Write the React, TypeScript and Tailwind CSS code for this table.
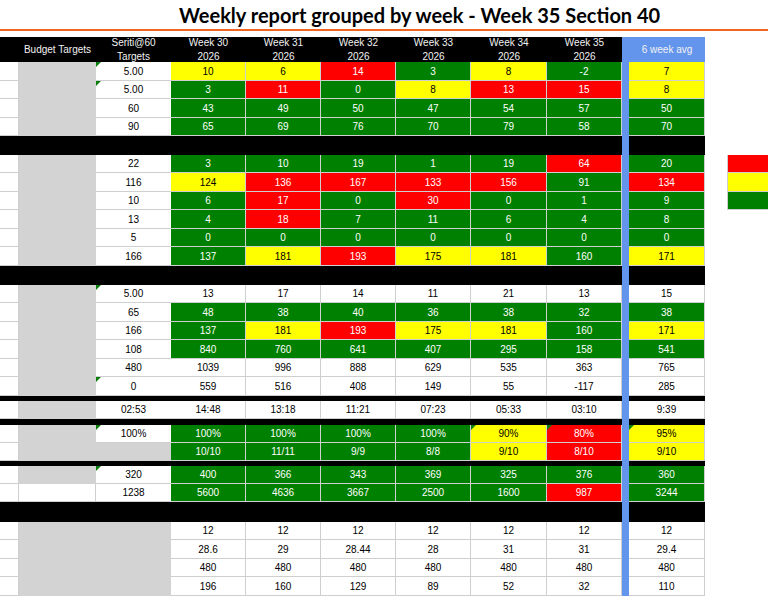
import React from "react";

type Tone = "G" | "Y" | "R" | "W";
type Cell = [string, Tone, boolean?];

type DataRow = {
  kind: "data";
  h: number;
  b: "gray" | "white";
  c: { text: string; tri?: boolean } | "gray";
  cells: Cell[];
  legend?: string;
};
type SepRow = { kind: "sep"; h: number };
type Row = DataRow | SepRow;

const HEIGHTS: Record<number, string> = {
  5: "h-[5px]",
  6: "h-[6px]",
  18: "h-[18px]",
  19: "h-[19px]",
  20: "h-[20px]",
};

const WEEK_W = ["w-[75px]", "w-[75px]", "w-[75px]", "w-[75px]", "w-[76px]", "w-[75px]"];

const TONES: Record<Tone, string> = {
  G: "bg-[#008000] text-white",
  Y: "bg-[#ffff00] text-black",
  R: "bg-[#ff0000] text-white",
  W: "bg-white text-black",
};

const weeks = ["Week 30", "Week 31", "Week 32", "Week 33", "Week 34", "Week 35"];

const r = (
  h: number,
  c: DataRow["c"],
  cells: Cell[],
  b: DataRow["b"] = "gray",
  legend?: string
): DataRow => ({ kind: "data", h, b, c, cells, legend });
const sep = (h: number): SepRow => ({ kind: "sep", h });

const rows: Row[] = [
  r(19, { text: "5.00", tri: true }, [["10", "Y"], ["6", "Y"], ["14", "R"], ["3", "G"], ["8", "Y"], ["-2", "G"], ["7", "Y"]]),
  r(18, { text: "5.00", tri: true }, [["3", "G"], ["11", "R"], ["0", "G"], ["8", "Y"], ["13", "R"], ["15", "R"], ["8", "Y"]]),
  r(19, { text: "60" }, [["43", "G"], ["49", "G"], ["50", "G"], ["47", "G"], ["54", "G"], ["57", "G"], ["50", "G"]]),
  r(18, { text: "90" }, [["65", "G"], ["69", "G"], ["76", "G"], ["70", "G"], ["79", "G"], ["58", "G"], ["70", "G"]]),
  sep(19),
  r(18, { text: "22" }, [["3", "G"], ["10", "G"], ["19", "G"], ["1", "G"], ["19", "G"], ["64", "R"], ["20", "G"]], "gray", "bg-[#ff0000]"),
  r(19, { text: "116" }, [["124", "Y"], ["136", "R"], ["167", "R"], ["133", "R"], ["156", "R"], ["91", "G"], ["134", "R"]], "gray", "bg-[#ffff00]"),
  r(18, { text: "10" }, [["6", "G"], ["17", "R"], ["0", "G"], ["30", "R"], ["0", "G"], ["1", "G"], ["9", "G"]], "gray", "bg-[#008000]"),
  r(19, { text: "13" }, [["4", "G"], ["18", "R"], ["7", "G"], ["11", "G"], ["6", "G"], ["4", "G"], ["8", "G"]]),
  r(18, { text: "5" }, [["0", "G"], ["0", "G"], ["0", "G"], ["0", "G"], ["0", "G"], ["0", "G"], ["0", "G"]]),
  r(19, { text: "166" }, [["137", "G"], ["181", "Y"], ["193", "R"], ["175", "Y"], ["181", "Y"], ["160", "G"], ["171", "Y"]]),
  sep(19),
  r(18, { text: "5.00", tri: true }, [["13", "W"], ["17", "W"], ["14", "W"], ["11", "W"], ["21", "W"], ["13", "W"], ["15", "W"]]),
  r(19, { text: "65" }, [["48", "G"], ["38", "G"], ["40", "G"], ["36", "G"], ["38", "G"], ["32", "G"], ["38", "G"]]),
  r(18, { text: "166" }, [["137", "G"], ["181", "Y"], ["193", "R"], ["175", "Y"], ["181", "Y"], ["160", "G"], ["171", "Y"]]),
  r(19, { text: "108" }, [["840", "G"], ["760", "G"], ["641", "G"], ["407", "G"], ["295", "G"], ["158", "G"], ["541", "G"]]),
  r(18, { text: "480" }, [["1039", "W"], ["996", "W"], ["888", "W"], ["629", "W"], ["535", "W"], ["363", "W"], ["765", "W"]]),
  r(19, { text: "0", tri: true }, [["559", "W"], ["516", "W"], ["408", "W"], ["149", "W"], ["55", "W"], ["-117", "W"], ["285", "W"]]),
  sep(5),
  r(18, { text: "02:53" }, [["14:48", "W"], ["13:18", "W"], ["11:21", "W"], ["07:23", "W"], ["05:33", "W"], ["03:10", "W"], ["9:39", "W"]]),
  sep(6),
  r(18, { text: "100%", tri: true }, [["100%", "G"], ["100%", "G"], ["100%", "G"], ["100%", "G"], ["90%", "Y", true], ["80%", "R", true], ["95%", "Y", true]]),
  r(18, "gray", [["10/10", "G"], ["11/11", "G"], ["9/9", "G"], ["8/8", "G"], ["9/10", "Y"], ["8/10", "R"], ["9/10", "Y"]]),
  sep(5),
  r(18, { text: "320", tri: true }, [["400", "G"], ["366", "G"], ["343", "G"], ["369", "G"], ["325", "G"], ["376", "G"], ["360", "G"]]),
  r(18, { text: "1238" }, [["5600", "G"], ["4636", "G"], ["3667", "G"], ["2500", "G"], ["1600", "G"], ["987", "R"], ["3244", "G"]], "white"),
  sep(20),
  r(18, "gray", [["12", "W"], ["12", "W"], ["12", "W"], ["12", "W"], ["12", "W"], ["12", "W"], ["12", "W"]]),
  r(19, "gray", [["28.6", "W"], ["29", "W"], ["28.44", "W"], ["28", "W"], ["31", "W"], ["31", "W"], ["29.4", "W"]]),
  r(18, "gray", [["480", "W"], ["480", "W"], ["480", "W"], ["480", "W"], ["480", "W"], ["480", "W"], ["480", "W"]]),
  r(19, "gray", [["196", "W"], ["160", "W"], ["129", "W"], ["89", "W"], ["52", "W"], ["32", "W"], ["110", "W"]]),
];

function Tri() {
  return (
    <span className="absolute left-0 top-0 border-t-[5px] border-r-[5px] border-t-[#0a7d0a] border-r-transparent" />
  );
}

function Value({ cell, width }: { cell: Cell; width: string }) {
  const [text, tone, tri] = cell;
  return (
    <div
      className={`relative ${width} h-full flex items-center justify-center border-r border-b border-[#cfcfcf] ${TONES[tone]}`}
    >
      {tri && <Tri />}
      {text}
    </div>
  );
}

function Line({ row }: { row: Row }) {
  if (row.kind === "sep") {
    return (
      <div className={`flex ${HEIGHTS[row.h]}`}>
        <div className="w-[622px] bg-black" />
        <div className="w-[7px] bg-[#6495ed]" />
        <div className="w-[76px] bg-black" />
      </div>
    );
  }
  return (
    <div className={`flex ${HEIGHTS[row.h]}`}>
      <div className="w-[19px] h-full bg-white border-r border-b border-[#cfcfcf]" />
      {row.c === "gray" ? (
        <div className="w-[152px] h-full bg-[#d3d3d3]" />
      ) : (
        <>
          {row.b === "gray" ? (
            <div className="w-[77px] h-full bg-[#d3d3d3]" />
          ) : (
            <div className="w-[77px] h-full bg-white border-r border-b border-[#cfcfcf]" />
          )}
          <div className="relative w-[75px] h-full flex items-center justify-center bg-white text-black border-b border-[#cfcfcf]">
            {row.c.tri && <Tri />}
            {row.c.text}
          </div>
        </>
      )}
      {row.cells.slice(0, 6).map((cell, i) => (
        <Value key={i} cell={cell} width={WEEK_W[i]} />
      ))}
      <div className="w-[7px] h-full bg-[#6495ed]" />
      <Value cell={row.cells[6]} width="w-[76px]" />
      {row.legend && (
        <>
          <div className="w-[22px]" />
          <div className={`w-[41px] h-full border-l border-b border-[#cfcfcf] ${row.legend}`} />
        </>
      )}
    </div>
  );
}

function HeadCell({ top, bottom, width }: { top: string; bottom: string; width: string }) {
  return (
    <div className={`${width} flex flex-col items-center gap-[2px]`}>
      <div className="h-[12px] leading-[12px] shrink-0">{top}</div>
      <div className="h-[12px] leading-[12px] shrink-0">{bottom}</div>
    </div>
  );
}

export default function App() {
  return (
    <div className="w-[768px] h-[597px] overflow-hidden bg-white font-['Liberation_Sans',Arial,sans-serif] text-[10px]">
      <div className="h-[31px] border-b-2 border-[#f26522] pl-[179px] pt-[4px]">
        <h1 className="font-['Lato',sans-serif] font-bold text-[20px] leading-[22px] text-black">
          Weekly report grouped by week - Week 35 Section 40
        </h1>
      </div>
      <div className="mt-[6px] flex h-[25px]">
        <div className="w-[622px] flex bg-black text-[#f2f2f2]">
          <div className="w-[19px]" />
          <div className="w-[77px] flex items-center justify-center">Budget Targets</div>
          <HeadCell top="Seriti@60" bottom="Targets" width="w-[75px]" />
          {weeks.map((w, i) => (
            <HeadCell key={w} top={w} bottom="2026" width={WEEK_W[i]} />
          ))}
        </div>
        <div className="w-[83px] flex items-center justify-center bg-[#6495ed] text-[#f2f2f2] pl-[7px]">
          6 week avg
        </div>
      </div>
      {rows.map((row, i) => (
        <Line key={i} row={row} />
      ))}
    </div>
  );
}
